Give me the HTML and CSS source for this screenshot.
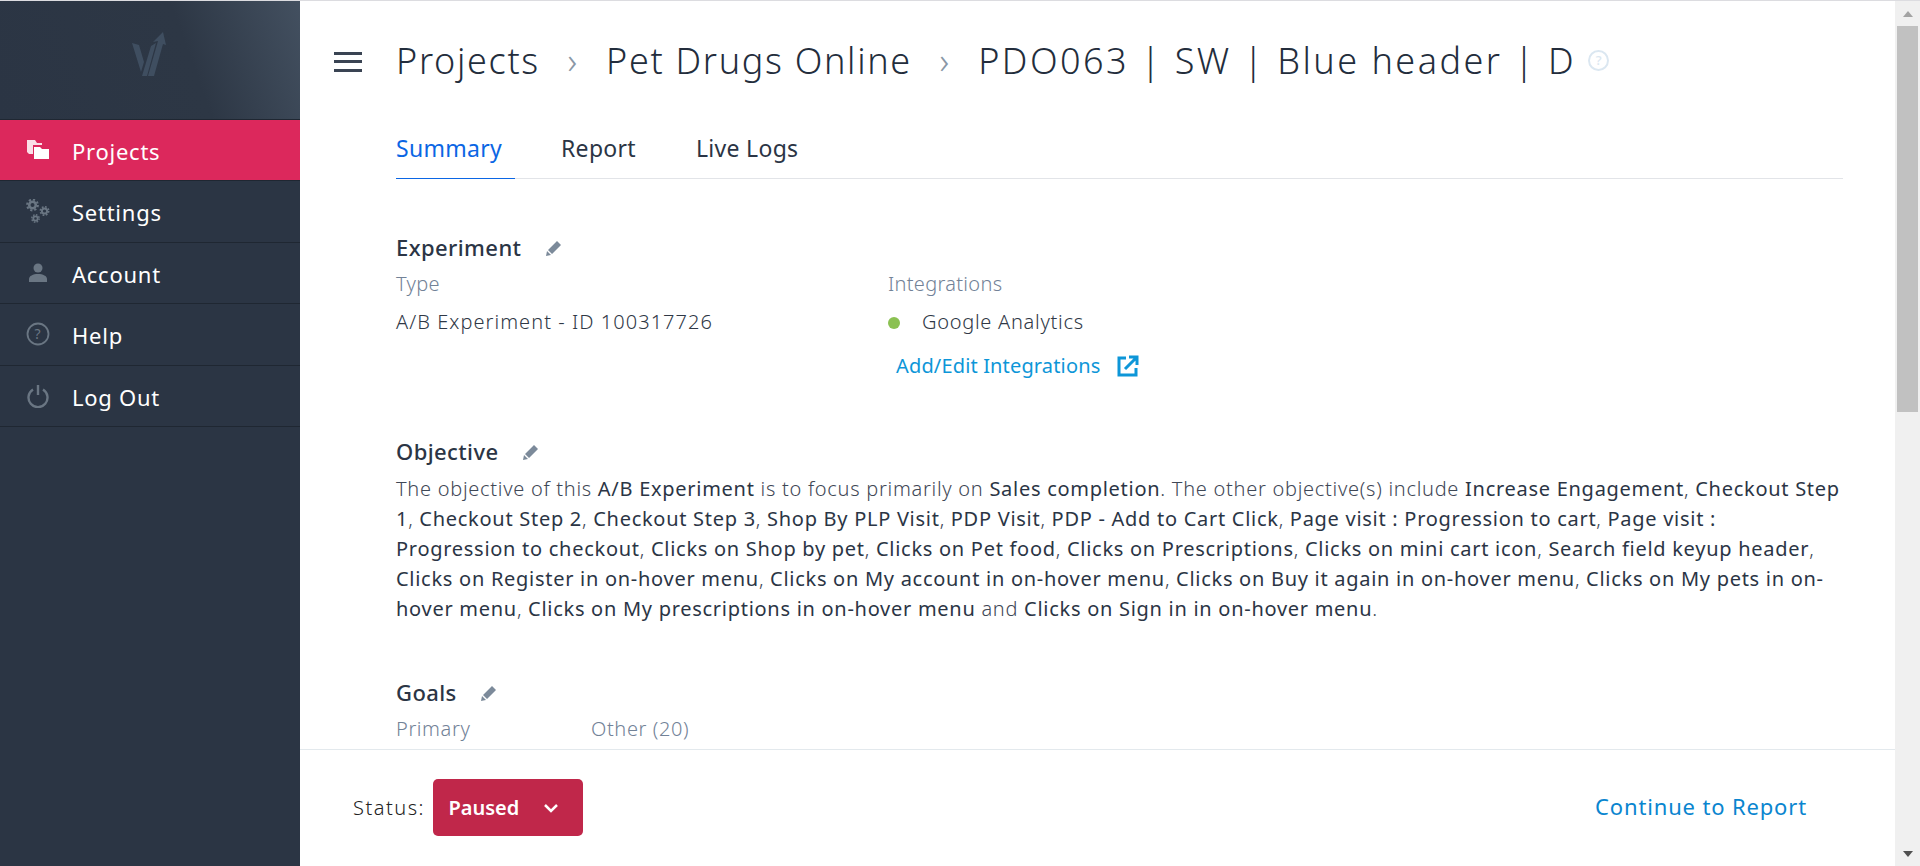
FILE: index.html
```html
<!DOCTYPE html>
<html lang="en">
<head>
    <meta charset="UTF-8">
    <title>PDO063 | SW | Blue header | D</title>
    <link rel="stylesheet" href="styles.css">
</head>
<body>
    <div class="app">
        <aside class="sidebar">
            <div class="logo">
                <svg width="36" height="44" viewBox="0 0 36 44"><path d="M0 11l7 2 5 17-3 10zM19 14l5-3-9 33-5 0zM31 0l3 13-3-1-9 32-6 0 10-35-5 1z" fill="#3f4e60"/></svg>
            </div>
            <a class="nav-item active">
                <svg class="nav-icon" viewBox="0 0 24 22"><path d="M1 1h8l2 3h5v2H7v9H3L1 13z" fill="#fff" opacity=".85"/><path d="M8 8h6l2 2h7v10H8z" fill="#fff"/></svg>
                Projects
            </a>
            <a class="nav-item">
                <svg class="nav-icon" viewBox="0 0 24 24">
                    <g fill="none" stroke="#6a7683">
                        <circle cx="6.500" cy="6" r="3.300" stroke-width="2.600"/>
                        <circle cx="6.500" cy="6" r="5.400" stroke-width="2" stroke-dasharray="2.200 2"/>
                        <circle cx="18.500" cy="12" r="2.600" stroke-width="2"/>
                        <circle cx="18.500" cy="12" r="4.200" stroke-width="1.600" stroke-dasharray="1.800 1.500"/>
                        <circle cx="9.500" cy="19.500" r="2.200" stroke-width="1.800"/>
                        <circle cx="9.500" cy="19.500" r="3.700" stroke-width="1.400" stroke-dasharray="1.600 1.300"/>
                    </g>
                </svg>
                Settings
            </a>
            <a class="nav-item">
                <svg class="nav-icon" viewBox="0 0 24 24"><circle cx="12" cy="7" r="4.500" fill="#6a7683"/><path d="M3 21v-3c0-3 4-5 9-5s9 2 9 5v3z" fill="#6a7683"/></svg>
                Account
            </a>
            <a class="nav-item">
                <svg class="nav-icon" viewBox="0 0 24 24"><circle cx="12" cy="12" r="10.500" fill="none" stroke="#6a7683" stroke-width="1.800"/><text x="12" y="17" class="nav-help">?</text></svg>
                Help
            </a>
            <a class="nav-item">
                <svg class="nav-icon" viewBox="0 0 24 24"><path d="M7 5.500a9.500 9.500 0 1 0 10 0" fill="none" stroke="#6a7683" stroke-width="2.400"/><path d="M12 1v10" stroke="#6a7683" stroke-width="2.400"/></svg>
                Log Out
            </a>
        </aside>

        <main class="main">
            <div class="content">
                <header class="topbar">
                    <div class="burger"><span></span><span></span><span></span></div>
                    <h1 class="crumbs">
                        <span>Projects</span><i class="sep">›</i>
                        <span>Pet Drugs Online</span><i class="sep">›</i>
                        <span class="crumb-last">PDO063 | SW | Blue header | D</span>
                        <span class="hint">?</span>
                    </h1>
                </header>

                <div class="body">
                    <nav class="tabs">
                        <a class="tab active">Summary</a>
                        <a class="tab">Report</a>
                        <a class="tab">Live Logs</a>
                    </nav>

                    <section class="section section-experiment">
                        <h2>Experiment <svg class="edit" viewBox="0 0 16 16"><path d="M11 1l4 4-9 9-4-4zM1 11l4 4-5 1z" fill="#7c8a9a"/></svg></h2>
                        <div class="columns">
                            <div class="col-type">
                                <div class="label">Type</div>
                                <div class="value value-id">A/B Experiment - ID 100317726</div>
                            </div>
                            <div>
                                <div class="label">Integrations</div>
                                <div class="value"><span class="dot"></span>Google Analytics</div>
                                <a class="link">Add/Edit Integrations
                                    <svg class="ext" viewBox="0 0 22 22"><path d="M9 3H2v17h17v-7" fill="none" stroke="#0d96d8" stroke-width="3"/><path d="M8 14L19 3M12 2h8v8" fill="none" stroke="#0d96d8" stroke-width="3"/></svg>
                                </a>
                            </div>
                        </div>
                    </section>

                    <section class="section section-objective">
                        <h2>Objective <svg class="edit" viewBox="0 0 16 16"><path d="M11 1l4 4-9 9-4-4zM1 11l4 4-5 1z" fill="#7c8a9a"/></svg></h2>
                        <p class="objective">The objective of this <b>A/B Experiment</b> is to focus primarily on <b>Sales completion</b>. The other objective(s) include <b>Increase Engagement</b>, <b>Checkout Step</b><br>
                        <b>1</b>, <b>Checkout Step 2</b>, <b>Checkout Step 3</b>, <b>Shop By PLP Visit</b>, <b>PDP Visit</b>, <b>PDP - Add to Cart Click</b>, <b>Page visit : Progression to cart</b>, <b>Page visit :</b><br>
                        <b>Progression to checkout</b>, <b>Clicks on Shop by pet</b>, <b>Clicks on Pet food</b>, <b>Clicks on Prescriptions</b>, <b>Clicks on mini cart icon</b>, <b>Search field keyup header</b>,<br>
                        <b>Clicks on Register in on-hover menu</b>, <b>Clicks on My account in on-hover menu</b>, <b>Clicks on Buy it again in on-hover menu</b>, <b>Clicks on My pets in on-</b><br>
                        <b>hover menu</b>, <b>Clicks on My prescriptions in on-hover menu</b> and <b>Clicks on Sign in in on-hover menu</b>.</p>
                    </section>

                    <section class="section section-goals">
                        <h2>Goals <svg class="edit" viewBox="0 0 16 16"><path d="M11 1l4 4-9 9-4-4zM1 11l4 4-5 1z" fill="#7c8a9a"/></svg></h2>
                        <div class="columns goals-cols">
                            <div class="label">Primary</div>
                            <div class="label">Other (20)</div>
                        </div>
                    </section>
                </div>
            </div>

            <footer class="footer">
                <span class="status-label">Status:</span>
                <button class="status-btn">Paused
                    <svg width="16" height="10" viewBox="0 0 16 10"><path d="M2 2l6 6 6-6" fill="none" stroke="#fff" stroke-width="2.500"/></svg>
                </button>
                <a class="continue">Continue to Report</a>
            </footer>
        </main>

        <div class="scrollbar">
            <div class="arrow up"></div>
            <div class="thumb"></div>
            <div class="track"></div>
            <div class="arrow down"></div>
        </div>
    </div>
</body>
</html>
```

FILE: styles.css
```css
* {
    margin: 0;
    padding: 0;
    box-sizing: border-box;
}

html, body {
    height: 100%;
    overflow: hidden;
}

body {
    font-family: "Noto Sans", "Open Sans", sans-serif;
    color: #2b3545;
    background: white;
}

.app {
    display: flex;
    height: 100vh;
    border-top: 1px solid #dcdce0;
}

/* sidebar */
.sidebar {
    width: 300px;
    flex-shrink: 0;
    background: #2b3544;
}

.logo {
    height: 119px;
    padding-top: 31px;
    display: flex;
    justify-content: center;
    align-items: flex-start;
    background: linear-gradient(250deg, #435060 0%, #2d3745 38%, #2b3544 100%);
    border-bottom: 1px solid #1f2732;
}

.nav-item {
    display: flex;
    align-items: center;
    height: 61.500px;
    padding: 2px 0 0 26px;
    color: white;
    font-size: 22px;
    letter-spacing: 0.750px;
    border-bottom: 1px solid #1f2732;
}

.nav-item.active {
    height: 61px;
    background: #dc285c;
}

.nav-icon {
    width: 24px;
    height: 24px;
    margin: -2px 22px 0 0;
}

.nav-help {
    font-size: 14px;
    fill: #6a7683;
    text-anchor: middle;
}

/* main */
.main {
    flex: 1;
    min-width: 0;
    display: flex;
    flex-direction: column;
}

.content {
    flex: 1;
    min-height: 0;
    overflow: hidden;
}

.topbar {
    display: flex;
    align-items: center;
    height: 121px;
    padding-left: 34px;
}

.burger {
    display: flex;
    flex-direction: column;
    gap: 5.500px;
    width: 28px;
    margin-right: 34px;
}

.burger span {
    height: 3px;
    background: #3a4453;
}

.crumbs {
    margin-top: -2px;
    font-size: 36px;
    font-weight: 300;
    color: #232d3c;
    display: flex;
    align-items: center;
    white-space: nowrap;
    letter-spacing: 1.680px;
}

.crumb-last {
    letter-spacing: 2.460px;
}

.sep {
    font-style: normal;
    color: #8a97a6;
    margin: 0 27.500px;
}

.hint {
    width: 21px;
    height: 21px;
    margin-left: 12px;
    border: 2px solid #dbe7f1;
    border-radius: 50%;
    color: #dbe7f1;
    font-size: 13px;
    font-weight: 500;
    line-height: 17px;
    text-align: center;
    letter-spacing: 0;
}

.body {
    padding: 0 52px 0 96px;
}

.tabs {
    display: flex;
    gap: 46px;
    height: 57px;
    border-bottom: 1px solid #e2e4e8;
}

.tab {
    font-size: 23px;
    height: 57px;
    line-height: 53px;
    padding-right: 14px;
    letter-spacing: 0.300px;
}

.tab.active {
    color: #0b66e4;
    border-bottom: 1px solid #0b66e4;
    width: 119px;
}

.section h2 {
    font-size: 22px;
    font-weight: 500;
    line-height: 30px;
    letter-spacing: 0.400px;
    margin-bottom: 4px;
}

.edit {
    width: 16px;
    height: 16px;
    margin-left: 18px;
}

.section-experiment {
    padding-top: 53px;
}

.section-objective {
    padding-top: 57px;
}

.section-goals {
    padding-top: 53px;
}

.columns {
    display: flex;
}

.col-type {
    width: 492px;
}

.label {
    font-size: 20px;
    font-weight: 300;
    color: #728297;
    line-height: 35px;
    letter-spacing: 0.300px;
}

.value {
    font-size: 20px;
    font-weight: 300;
    color: #2f3846;
    line-height: 42px;
    letter-spacing: 0.730px;
}

.value-id {
    letter-spacing: 1.050px;
}

.dot {
    display: inline-block;
    width: 12px;
    height: 12px;
    border-radius: 50%;
    background: #8bc152;
    margin-right: 22px;
}

.link {
    display: block;
    margin: 9px 0 0 8px;
    font-size: 20px;
    color: #0d96d8;
    letter-spacing: 0.150px;
}

.ext {
    width: 22px;
    height: 22px;
    margin-left: 11px;
    vertical-align: -4px;
}

.objective {
    margin-top: 7.500px;
    font-size: 20px;
    font-weight: 300;
    line-height: 30px;
    color: #3f4856;
    letter-spacing: 0.720px;
    white-space: nowrap;
}

.objective b {
    font-weight: 400;
    color: #2b3545;
}

.goals-cols .label {
    width: 195px;
    letter-spacing: 0.600px;
}

.footer {
    height: 117px;
    flex-shrink: 0;
    display: flex;
    align-items: center;
    padding: 0 88px 1px 53px;
    border-top: 1px solid #e3e9ed;
}

.status-label {
    font-size: 20px;
    font-weight: 300;
    color: #222;
    letter-spacing: 1.500px;
    margin-right: 8.500px;
}

.status-btn {
    display: flex;
    align-items: center;
    gap: 24px;
    width: 150px;
    height: 57px;
    padding-left: 15px;
    border: none;
    border-radius: 5px;
    background: #c0274a;
    color: white;
    font: 600 20px "Noto Sans", sans-serif;
}

.continue {
    margin: 0 0 4px auto;
    font-size: 22px;
    color: #0a85cf;
    letter-spacing: 0.850px;
}

/* scrollbar */
.scrollbar {
    width: 25px;
    flex-shrink: 0;
    display: flex;
    flex-direction: column;
    background: #f0f0f0;
}

.arrow {
    height: 25px;
    flex-shrink: 0;
    display: flex;
    align-items: center;
    justify-content: center;
}

.arrow.up::before {
    content: "";
    border: 5.500px solid transparent;
    border-top: 0;
    border-bottom: 6px solid #a3a3a3;
}

.arrow.down::before {
    content: "";
    border: 5.500px solid transparent;
    border-bottom: 0;
    border-top: 6px solid #505050;
}

.thumb {
    height: 386px;
    margin: 0 2px;
    background: #c1c1c1;
}

.track {
    flex: 1;
}
```
